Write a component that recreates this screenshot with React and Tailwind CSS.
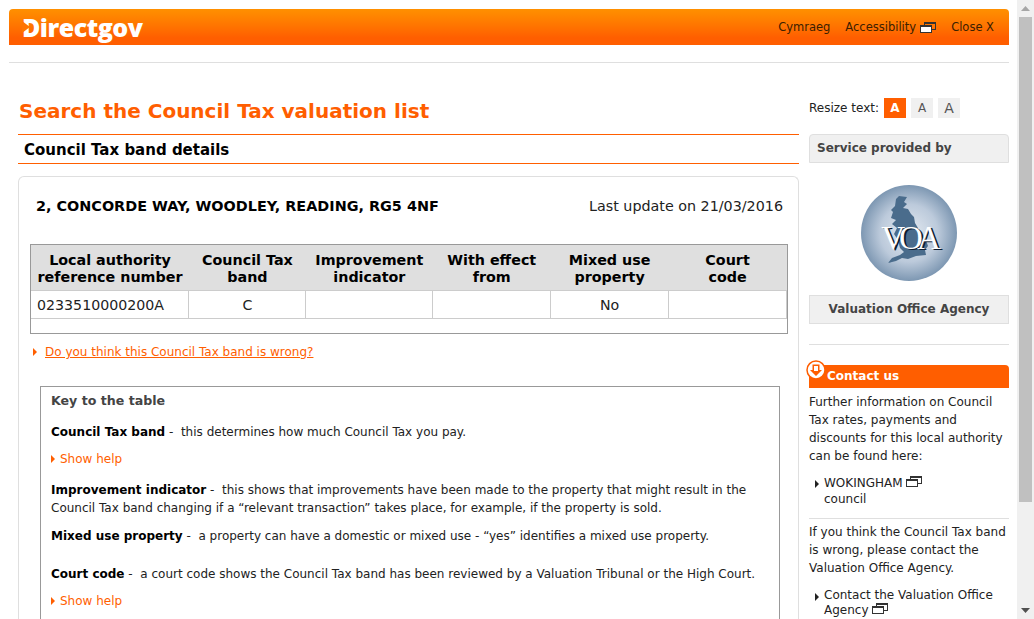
const verdana = 'font-["DejaVu_Sans",Verdana,sans-serif]';

function NewWindowIcon({ dark }) {
  return (
    <svg className="inline-block align-baseline" width="16" height="11" viewBox="0 0 16 11">
      <rect x="4.5" y="0.5" width="11" height="7" fill={dark ? '#333' : 'none'} stroke="#333" />
      <rect x="4.5" y="0.5" width="11" height="1.5" fill="#333" />
      <rect x="0.5" y="3.5" width="11" height="7" fill="#fff" stroke="#333" />
      <rect x="0.5" y="3.5" width="11" height="1.5" fill="#333" />
    </svg>
  );
}

function Arrow({ color = '#ff5e00' }) {
  return (
    <svg className="shrink-0" width="4" height="8" viewBox="0 0 4 8">
      <path d="M0 0l4 4-4 4z" fill={color} />
    </svg>
  );
}

function VoaLogo() {
  return (
    <svg width="98" height="98" viewBox="0 0 98 98">
      <defs>
        <radialGradient id="voaGlobe" cx="50%" cy="50%" r="50%">
          <stop offset="0%" stopColor="#e4eaf1" />
          <stop offset="60%" stopColor="#bccadb" />
          <stop offset="100%" stopColor="#7d97b2" />
        </radialGradient>
      </defs>
      <circle cx="49" cy="49" r="48" fill="url(#voaGlobe)" />
      <path
        d="M39 12L47 13L44 18L47 20L43 24L48 25L51 30L54 33L55 39L58 44L60 50L66 56L68 62L65 66L66 71L56 72L48 75L42 74L36 77L28 79L32 74L40 71L44 68L40 64L38 56L34 50L37 44L32 40L36 36L31 34L33 28L31 26L35 22L36 15z"
        fill="#4a6c8c"
      />
      <text x="50" y="66" textAnchor="middle" className='font-["Liberation_Serif",serif]' fontSize="33" fill="#0c1c30" letterSpacing="-6">VOA</text>
      <text x="48" y="65" textAnchor="middle" className='font-["Liberation_Serif",serif]' fontSize="33" fill="#fff" letterSpacing="-6">VOA</text>
    </svg>
  );
}

const cols = [
  { head: ['Local authority', 'reference number'], w: 'w-[158px]', cell: '0233510000200A', left: true },
  { head: ['Council Tax', 'band'], w: 'w-[117px]', cell: 'C' },
  { head: ['Improvement', 'indicator'], w: 'w-[127px]', cell: '' },
  { head: ['With effect', 'from'], w: 'w-[118px]', cell: '' },
  { head: ['Mixed use', 'property'], w: 'w-[118px]', cell: 'No' },
  { head: ['Court', 'code'], w: 'w-[118px]', cell: '' },
];

function ShowHelp({ className }) {
  return (
    <div className={`flex items-center gap-[5px] text-[#ff5e00] ${className}`}>
      <Arrow />
      <span>Show help</span>
    </div>
  );
}

export default function App() {
  return (
    <div className={`flex h-[619px] overflow-hidden bg-white text-[12px] leading-[18px] text-[#222] ${verdana}`}>
      <div className="w-[1017px] shrink-0 pl-[9px] pr-[8px] pt-[9px]">
        {/* Header */}
        <header className="flex h-[36px] items-center justify-between rounded-t-[4px] bg-gradient-to-b from-[#ff9000] to-[#ff5e00] to-[80%] pl-[13px] pr-[15px]">
          <div className="relative">
            <span className='font-["Open_Sans",sans-serif] text-[25px] leading-[30px] font-extrabold tracking-[-0.5px] text-white'>Directgov</span>
            <svg className="absolute top-[9px] left-0" width="9" height="12" viewBox="0 0 9 12">
              <path d="M0 0l8 6-8 6z" fill="#ff7500" />
            </svg>
          </div>
          <nav className="flex items-center text-[11.5px] text-[#3a2000]">
            <span>Cymraeg</span>
            <span className="ml-[15px]">Accessibility</span>
            <span className="ml-[4px] flex"><NewWindowIcon /></span>
            <span className="ml-[15px]">Close X</span>
          </nav>
        </header>
        <div className="mt-[17px] border-t border-[#dfdfdf]" />

        <div className="mt-[26px] flex gap-[10px] pl-[9px]">
          {/* Main column */}
          <main className="w-[781px] shrink-0">
            <h1 className="mt-[9px] pl-[1px] text-[20px] leading-[26px] font-bold text-[#ff5e00]">Search the Council Tax valuation list</h1>
            <h2 className="mt-[10px] h-[30px] border-y border-[#ff5e00] pl-[6px] text-[15px] leading-[30px] font-bold text-black">Council Tax band details</h2>

            <section className="mt-[12px] rounded-t-[6px] border border-b-0 border-[#dfdfdf] pl-[11px] pr-[10px] pt-[19px]">
              <div className="flex items-center justify-between pr-[5px] pl-[6px] text-[14.3px] leading-[20px]">
                <strong className="text-[14.4px] text-black">2, CONCORDE WAY, WOODLEY, READING, RG5 4NF</strong>
                <span>Last update on 21/03/2016</span>
              </div>

              <div className="mt-[28px] h-[90px] border border-[#999] text-[14.2px]">
                <table className="table-fixed border-collapse">
                  <thead>
                    <tr className="h-[45px] bg-[#dfdfdf]">
                      {cols.map((c) => (
                        <th key={c.head[0]} className={`${c.w} p-0 pt-[4px] text-center text-[14.3px] leading-[17px] font-bold text-black`}>
                          {c.head[0]}<br />{c.head[1]}
                        </th>
                      ))}
                    </tr>
                  </thead>
                  <tbody>
                    <tr className="h-[28px]">
                      {cols.map((c) => (
                        <td key={c.head[0]} className={`border-r border-b border-t border-[#ccc] p-0 pt-[2px] ${c.left ? 'pl-[6px] text-left' : 'text-center'}`}>
                          {c.cell}
                        </td>
                      ))}
                    </tr>
                  </tbody>
                </table>
              </div>

              <div className="mt-[9px] ml-[3px] flex items-center gap-[8px] text-[#ff5e00]">
                <Arrow />
                <a className="underline">Do you think this Council Tax band is wrong?</a>
              </div>

              {/* Key */}
              <div className="mt-[25px] ml-[10px] h-[300px] w-[740px] border border-[#999] px-[10px] pt-[5px]">
                <h3 className="text-[12.6px] leading-[18px] font-bold text-[#444]">Key to the table</h3>
                <p className="mt-[13px]"><strong className="text-black">Council Tax band</strong> -&nbsp; this determines how much Council Tax you pay.</p>
                <ShowHelp className="mt-[9px]" />
                <p className="mt-[13px]"><strong className="text-black">Improvement indicator</strong> -&nbsp; this shows that improvements have been made to the property that might result in the Council Tax band changing if a “relevant transaction” takes place, for example, if the property is sold.</p>
                <p className="mt-[10px]"><strong className="text-black">Mixed use property</strong> -&nbsp; a property can have a domestic or mixed use - “yes” identifies a mixed use property.</p>
                <p className="mt-[20px]"><strong className="text-black">Court code</strong> -&nbsp; a court code shows the Council Tax band has been reviewed by a Valuation Tribunal or the High Court.</p>
                <ShowHelp className="mt-[9px]" />
              </div>
            </section>
          </main>

          {/* Sidebar */}
          <aside className="w-[200px] shrink-0 pt-[9px]">
            <div className="flex h-[20px] items-center">
              <span>Resize text:</span>
              <span className="ml-[5px] flex h-[20px] w-[22px] items-center justify-center bg-[#ff5e00] text-[12px] font-bold text-white">A</span>
              <span className="ml-[5px] flex h-[20px] w-[22px] items-center justify-center bg-[#f0f0f0] text-[12px] text-[#555]">A</span>
              <span className="ml-[5px] flex h-[20px] w-[22px] items-center justify-center bg-[#f0f0f0] text-[14px] text-[#555]">A</span>
            </div>
            <div className="mt-[16px] h-[29px] rounded-t-[4px] border border-[#dfdfdf] bg-[#f0f0f0] pl-[7px] text-[12px] leading-[27px] font-bold text-[#444]">Service provided by</div>
            <div className="mt-[21px] flex justify-center"><VoaLogo /></div>
            <div className="mt-[13px] h-[29px] border border-[#dfdfdf] bg-[#f0f0f0] text-center text-[12px] leading-[27px] font-bold text-[#444]">Valuation Office Agency</div>
            <div className="mt-[20px] border-t border-[#dfdfdf]" />
            <div className="relative mt-[20px] h-[23px] rounded-tr-[4px] bg-[#ff5e00] pl-[18px] text-[12px] leading-[23px] font-bold text-white">
              Contact us
              <svg className="absolute -top-[5px] -left-[3px]" width="20" height="20" viewBox="0 0 20 20">
                <circle cx="10" cy="10" r="9" fill="#fff" stroke="#ff5e00" strokeWidth="1.5" />
                <path d="M6.5 4.5h7v5.5h2.5L10 16 4 10h2.5z" fill="#ff5e00" />
                <path d="M8 6h4v5h-4z" fill="#fff" />
              </svg>
            </div>
            <p className="mt-[5px]">Further information on Council Tax rates, payments and discounts for this local authority can be found here:</p>
            <div className="mt-[10px] flex gap-[5px] pl-[6px]">
              <span className="mt-[5px]"><Arrow color="#222" /></span>
              <span className="leading-[16px]">WOKINGHAM <NewWindowIcon /><br />council</span>
            </div>
            <div className="mt-[11px] border-t border-[#dfdfdf]" />
            <p className="mt-[4px]">If you think the Council Tax band is wrong, please contact the Valuation Office Agency.</p>
            <div className="mt-[11px] flex gap-[5px] pl-[6px]">
              <span className="mt-[5px]"><Arrow color="#222" /></span>
              <span className="leading-[15px]">Contact the Valuation Office Agency <NewWindowIcon /></span>
            </div>
          </aside>
        </div>
      </div>

      {/* Scrollbar */}
      <div className="flex w-[17px] shrink-0 flex-col bg-[#f0f0f0]">
        <div className="flex h-[17px] items-center justify-center">
          <svg width="9" height="5" viewBox="0 0 9 5"><path d="M0 5l4.5-5 4.5 5z" fill="#a6a6a6" /></svg>
        </div>
        <div className="mx-[2px] h-[485px] bg-[#c0c0c0]" />
        <div className="mt-auto flex h-[17px] items-center justify-center">
          <svg width="9" height="5" viewBox="0 0 9 5"><path d="M0 0l4.5 5 4.5-5z" fill="#505050" /></svg>
        </div>
      </div>
    </div>
  );
}
